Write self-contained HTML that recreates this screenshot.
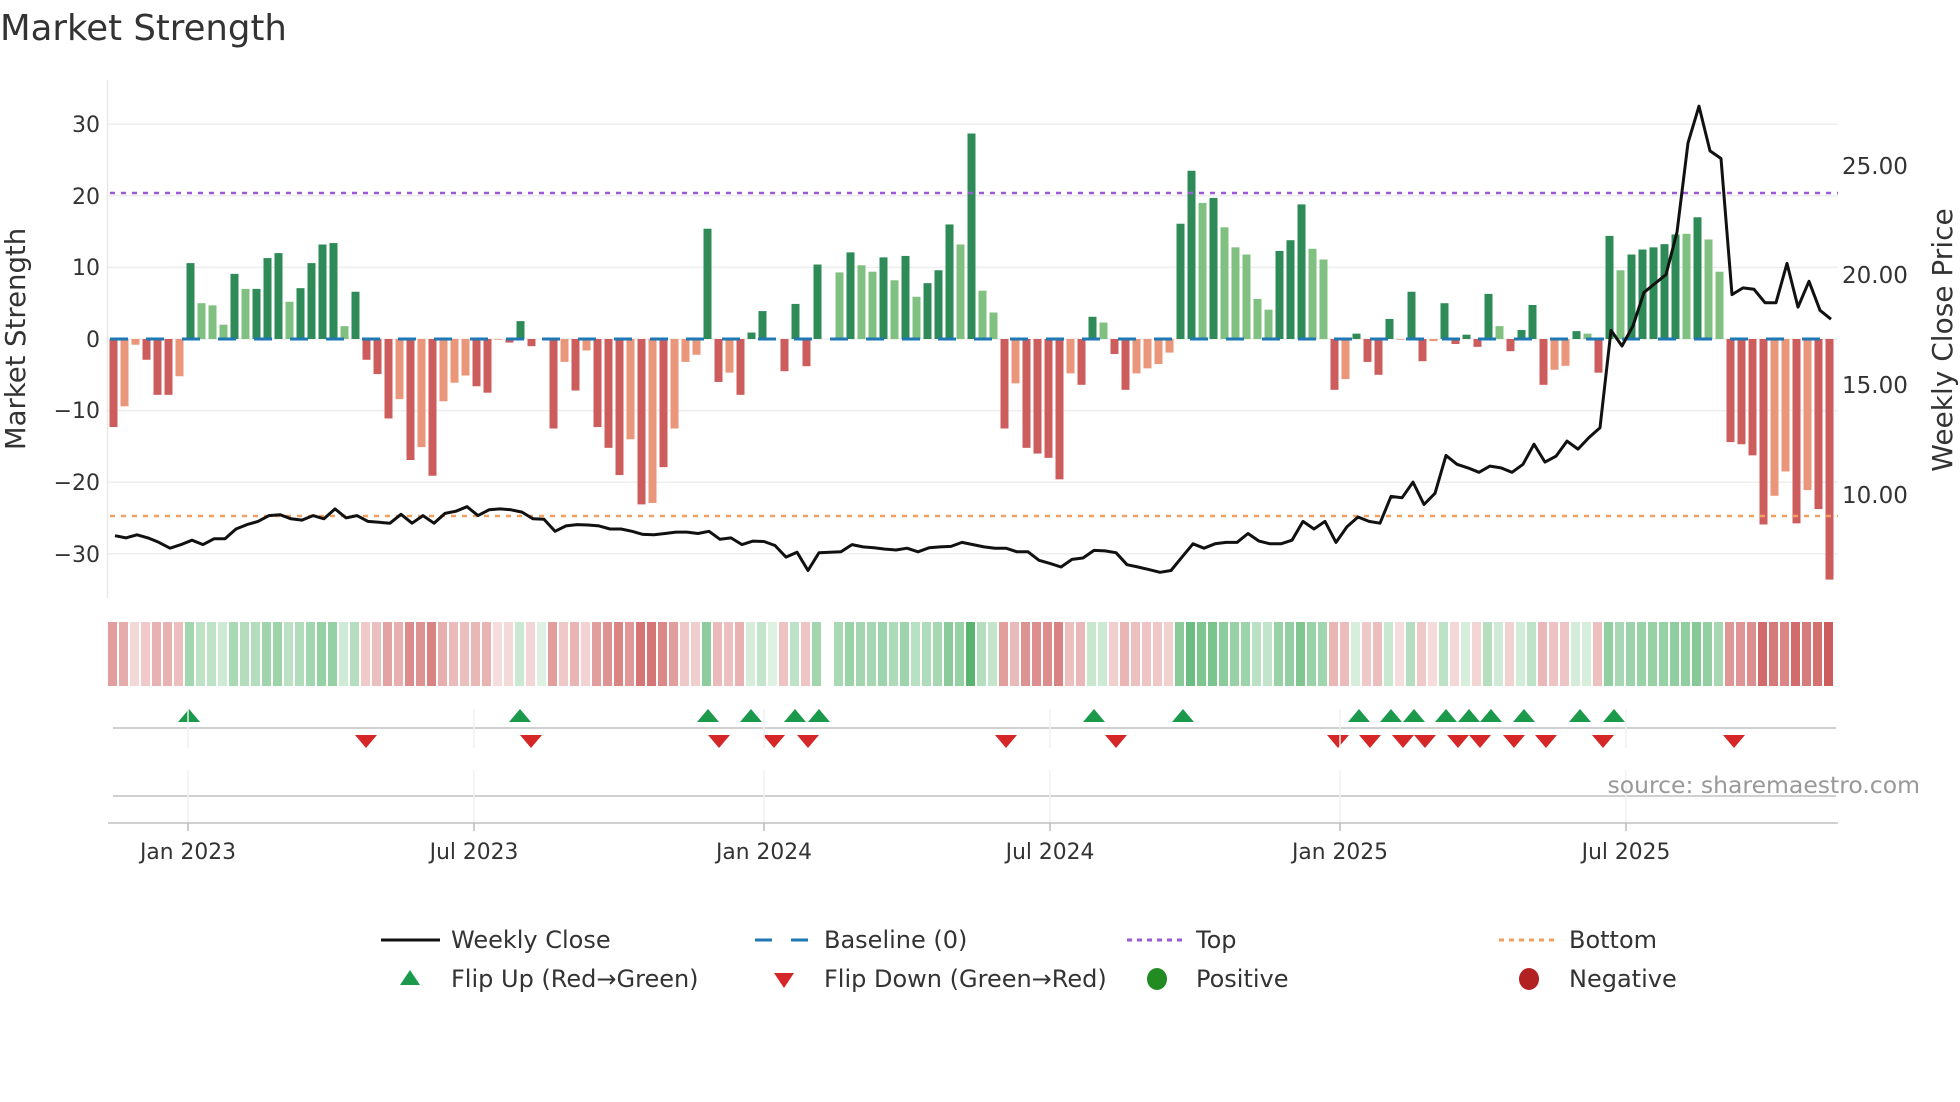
<!DOCTYPE html>
<html><head><meta charset="utf-8"><style>
html,body{margin:0;padding:0;background:#fff;}
svg{display:block;font-family:"DejaVu Sans","Liberation Sans",sans-serif;}
</style></head><body>
<svg id="s" width="1960" height="1102" xmlns="http://www.w3.org/2000/svg">
<text x="0" y="40" font-size="35.5" fill="#333">Market Strength</text>
<line x1="107.5" y1="80" x2="107.5" y2="598" stroke="#e8e8e8" stroke-width="1.5"/>
<g id="grid"></g>
<g id="bars"></g>
<line x1="110" y1="339" x2="1838" y2="339" stroke="#1f77b4" stroke-width="3" stroke-dasharray="18,18"/>
<line x1="110" y1="193" x2="1838" y2="193" stroke="#9b59d6" stroke-width="2.5" stroke-dasharray="5,6"/>
<line x1="110" y1="516" x2="1838" y2="516" stroke="#f0a060" stroke-width="2.5" stroke-dasharray="5,6"/>
<polyline id="pl" fill="none" stroke="#111" stroke-width="3" stroke-linejoin="round"/>
<g id="strip"></g>
<g id="tri"></g>
<line x1="113" y1="728" x2="1836" y2="728" stroke="#d0d0d0" stroke-width="2"/>
<line x1="113" y1="796" x2="1836" y2="796" stroke="#d0d0d0" stroke-width="2"/>
<line x1="108" y1="823" x2="1838" y2="823" stroke="#d0d0d0" stroke-width="2"/>
<g id="ticks" font-size="21.8" fill="#333"></g>
<text x="1920" y="793" font-size="23.5" fill="#999" text-anchor="end">source: sharemaestro.com</text>
<g font-size="22" fill="#333" text-anchor="end">
<text x="100" y="132">30</text><text x="100" y="204">20</text><text x="100" y="275">10</text><text x="100" y="347">0</text>
<text x="100" y="418">−10</text><text x="100" y="490">−20</text><text x="100" y="562">−30</text>
</g>
<g font-size="23" fill="#333">
<text x="1842" y="174">25.00</text><text x="1842" y="283">20.00</text><text x="1842" y="393">15.00</text><text x="1842" y="503">10.00</text>
</g>
<text transform="translate(25,339) rotate(-90)" font-size="27.5" fill="#333" text-anchor="middle">Market Strength</text>
<text transform="translate(1952,340) rotate(-90)" font-size="28" fill="#333" text-anchor="middle">Weekly Close Price</text>
<g font-size="24" fill="#333">
<line x1="381" y1="940" x2="440" y2="940" stroke="#111" stroke-width="3"/>
<text x="451" y="948">Weekly Close</text>
<line x1="755" y1="940" x2="810" y2="940" stroke="#1f77b4" stroke-width="3" stroke-dasharray="17,19"/>
<text x="824" y="948">Baseline (0)</text>
<line x1="1127" y1="940" x2="1182" y2="940" stroke="#9b59d6" stroke-width="3" stroke-dasharray="5,5"/>
<text x="1196" y="948">Top</text>
<line x1="1499" y1="940" x2="1554" y2="940" stroke="#f0a060" stroke-width="3" stroke-dasharray="5,5"/>
<text x="1569" y="948">Bottom</text>
<polygon points="400,985 420,985 410,970" fill="#1a9a4a"/>
<text x="451" y="987">Flip Up (Red→Green)</text>
<polygon points="774,973 794,973 784,988" fill="#d62728"/>
<text x="824" y="987">Flip Down (Green→Red)</text>
<ellipse cx="1157" cy="979" rx="10" ry="11" fill="#228b22"/>
<text x="1196" y="987">Positive</text>
<ellipse cx="1529" cy="979" rx="10" ry="11" fill="#b22222"/>
<text x="1569" y="987">Negative</text>
</g>
</svg>
<script>
var NS="http://www.w3.org/2000/svg";
function el(t,a,p){var e=document.createElementNS(NS,t);for(var k in a)e.setAttribute(k,a[k]);document.getElementById(p).appendChild(e);return e;}
var V=[-12.3,-9.4,-0.8,-2.9,-7.8,-7.8,-5.2,10.6,5,4.7,2,9.1,7,7,11.3,12,5.2,7.1,10.6,13.2,13.4,1.8,6.6,-2.9,-4.9,-11.1,-8.4,-16.9,-15.1,-19.1,-8.7,-6.1,-5.1,-6.6,-7.5,-0.1,-0.5,2.5,-1,0,-12.5,-3.2,-7.2,-1.6,-12.3,-15.2,-19,-14,-23.1,-22.9,-17.9,-12.5,-3.2,-2.2,15.4,-6,-4.7,-7.8,0.9,3.9,0,-4.5,4.9,-3.8,10.4,0,9.3,12.1,10.3,9.4,11.4,8.2,11.6,5.9,7.8,9.6,16,13.2,28.7,
6.75,3.7,-12.5,-6.2,-15.2,-16,-16.6,-19.6,-4.8,-6.4,3.1,2.3,-2.1,-7.1,-4.8,-4.1,-3.5,-1.9,16.1,23.5,19,19.7,15.6,12.8,11.8,5.6,4.1,12.3,13.8,18.8,12.6,11.1,-7.1,-5.6,0.75,-3.2,-5,2.8,-0.1,6.6,-3.1,-0.3,5,-0.7,0.6,-1.1,6.3,1.8,-1.7,1.25,4.75,-6.4,-4.3,-3.75,1.1,0.75,-4.7,14.4,9.6,11.8,12.5,12.8,13.25,14.6,14.7,17,13.9,9.4,-14.4,-14.7,-16.25,-25.9,-21.9,-18.5,-25.75,-21.1,-23.75,-33.6];
var Dl=[1,0,0,1,1,1,0,1,0,0,0,1,0,1,1,1,0,1,1,1,1,0,1,1,1,1,0,1,0,1,0,0,0,1,1,0,1,1,1,1,1,0,1,0,1,1,1,0,1,0,1,0,0,0,1,1,0,1,1,1,1,1,1,1,1,1,0,1,0,0,1,0,1,0,1,1,1,0,1,
0,0,1,0,1,1,1,1,0,1,1,0,1,1,0,0,0,0,1,1,0,1,0,0,0,0,0,1,1,1,0,0,1,0,1,1,1,1,0,1,1,0,1,1,1,1,1,0,1,1,1,1,0,0,1,0,1,1,0,1,1,1,1,1,0,1,0,0,1,1,1,1,0,0,1,0,1];
var L=[1200,1205,1198,1205,1215,1228,1220,1210,1220,1207,1207,1185,1175,1168,1155,1153,1162,1165,1155,1162,1140,1160,1155,1168,1170,1172,1152,1172,1155,1172,1150,1145,1135,1155,1142,1140,1142,1147,1162,1163,1190,1178,1175,1176,1178,1185,1185,1190,1197,1198,1195,1192,1192,1195,1190,1208,1205,1220,1212,1213,1222,1248,1237,1278,1238,1237,1236,1220,1225,1227,1230,1232,1228,1236,1227,1225,1224,1215,1220,
1225,1228,1228,1236,1236,1255,1262,1270,1253,1250,1233,1234,1238,1265,1270,1276,1282,1278,1248,1218,1228,1218,1215,1215,1195,1212,1218,1218,1210,1168,1185,1168,1215,1180,1158,1168,1172,1112,1115,1080,1130,1105,1020,1040,1048,1058,1044,1048,1058,1040,995,1035,1022,988,1006,980,958,740,775,730,655,635,615,520,320,238,338,355,660,645,648,678,678,590,688,630,695,715];
[-30,-20,-10,0,10,20,30].forEach(function(v){var y=339-7.16*v;el("line",{x1:108,x2:1838,y1:y,y2:y,stroke:"#eeeeee","stroke-width":1.5},"grid");});
var pts=[];
function mix(a,b,t){return "rgb("+[0,1,2].map(function(i){return Math.round(a[i]+(b[i]-a[i])*t)}).join(",")+")";}
for(var i=0;i<V.length;i++){
 var v=V[i],cx=113.5+11*i,d=(Dl[i]===undefined?1:Dl[i]);
 if(Math.abs(v)>0.05){var h=Math.abs(v)*7.16,y=v>0?339-h:339;
  var c=v>0?(d?"#2e8b57":"#80c080"):(d?"#cd5c5c":"#e9967a");
  el("rect",{x:cx-4,y:y,width:8,height:h,fill:c},"bars");}
 pts.push((cx+1.5).toFixed(1)+","+(L[i]/2.24).toFixed(1));
 if(i!==65){var t=Math.min(1,Math.pow(Math.abs(v)/30,0.8));
  var col=v>=0?mix([222,241,226],[84,178,108],t):mix([246,222,222],[205,92,92],t);
  el("rect",{x:108+11*i,y:622,width:9,height:64,fill:col},"strip");}
}
document.getElementById("pl").setAttribute("points",pts.join(" "));
[188,474,764,1050,1340,1626].forEach(function(x,k){
 el("line",{x1:x,x2:x,y1:709,y2:748,stroke:"#eef0f4","stroke-width":1.5},"ticks");
 el("line",{x1:x,x2:x,y1:770,y2:822,stroke:"#eef0f4","stroke-width":1.5},"ticks");
 el("line",{x1:x,x2:x,y1:823,y2:831,stroke:"#bbb","stroke-width":1.5},"ticks");
 var t=el("text",{x:x,y:859,"text-anchor":"middle"},"ticks");t.textContent=["Jan 2023","Jul 2023","Jan 2024","Jul 2024","Jan 2025","Jul 2025"][k];});
[189,520,708,751,795,819,1094,1183,1359,1391,1414,1446,1469,1491,1524,1580,1614].forEach(function(x){
 el("polygon",{points:(x-11)+",722 "+(x+11)+",722 "+x+",709",fill:"#1a9a4a"},"tri");});
[366,531,719,774,808,1006,1116,1338,1370,1403,1425,1458,1480,1514,1546,1603,1734].forEach(function(x){
 el("polygon",{points:(x-11)+",735 "+(x+11)+",735 "+x+",748",fill:"#d62728"},"tri");});
</script>
</body></html>
